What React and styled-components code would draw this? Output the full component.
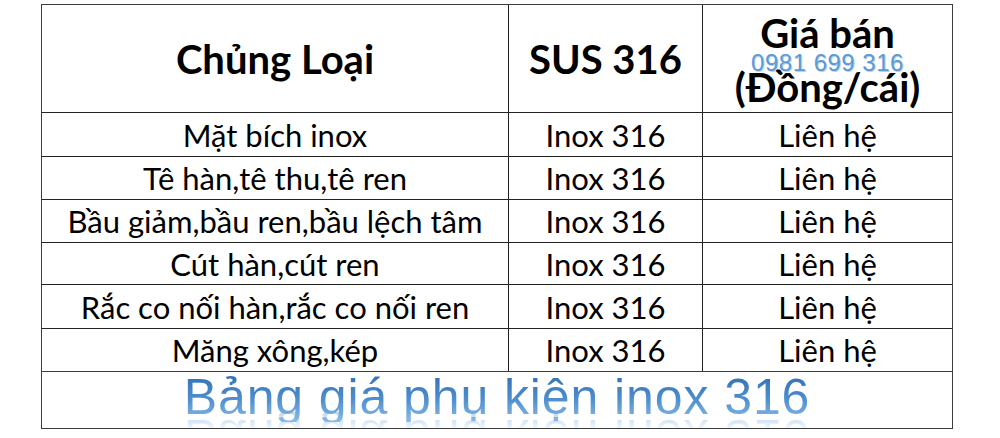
import styled, { createGlobalStyle } from "styled-components";

const GlobalStyle = createGlobalStyle`
	html, body {
		margin: 0;
		padding: 0;
		background: #ffffff;
	}
	body {
		font-family: Lato, "Open Sans", sans-serif;
		color: #000000;
	}
`;

const rows = [
	"Mặt bích inox",
	"Tê hàn,tê thu,tê ren",
	"Bầu giảm,bầu ren,bầu lệch tâm",
	"Cút hàn,cút ren",
	"Rắc co nối hàn,rắc co nối ren",
	"Măng xông,kép",
];

export default function App() {
	return (
		<>
			<GlobalStyle />
			<Page>
				<PriceTable>
					<HeadCell>Chủng Loại</HeadCell>
					<HeadCell>SUS 316</HeadCell>
					<HeadCell>
						<PriceHead>
							<span>Giá bán</span>
							<span>(Đồng/cái)</span>
						</PriceHead>
						<Phone>0981 699 316</Phone>
					</HeadCell>
					{rows.map((name) => (
						<Row key={name}>
							<Cell>{name}</Cell>
							<Cell>Inox 316</Cell>
							<Cell>Liên hệ</Cell>
						</Row>
					))}
					<Footer>
						<Title>Bảng giá phụ kiện inox 316</Title>
					</Footer>
				</PriceTable>
			</Page>
		</>
	);
}

const Page = styled.div`
	width: 1000px;
	height: 438px;
	padding: 4px 0 0 41px;
	box-sizing: border-box;
`;

const PriceTable = styled.div`
	display: grid;
	grid-template-columns: 466px 194px 250px;
	grid-template-rows: 107px 44px 43px 43px 42px 44px 43px 57px;
	width: 912px;
	border: 1.5px solid #3c3c3c;
	box-sizing: border-box;
`;

const Row = styled.div`
	display: contents;
`;

const Cell = styled.div`
	display: flex;
	justify-content: center;
	align-items: center;
	font-size: 31px;
	border-top: 1px solid #222222;
	border-left: 1px solid #222222;
	white-space: nowrap;

	&:first-child {
		border-left: none;
	}
`;

const HeadCell = styled(Cell)`
	font-size: 40px;
	font-weight: 700;
	border-top: none;
	position: relative;
`;

const PriceHead = styled.div`
	display: flex;
	flex-direction: column;
	align-items: center;
	line-height: 54px;
	margin-top: 2px;
`;

const Phone = styled.span`
	position: absolute;
	left: 0;
	right: 0;
	top: 46px;
	text-align: center;
	font-family: "Liberation Sans", Arial, sans-serif;
	font-weight: 400;
	font-size: 24px;
	line-height: 24px;
	letter-spacing: 0.5px;
	color: #5b9bd5;
	text-shadow: 1px 1px 0 #b7d1ee, -0.5px -0.5px 0 #ffffff;
`;

const Footer = styled.div`
	grid-column: 1 / -1;
	display: flex;
	justify-content: center;
	align-items: flex-start;
	border-top: 1.5px solid #3c3c3c;
	overflow: hidden;
`;

const Title = styled.div`
	font-family: "Liberation Sans", Arial, sans-serif;
	font-size: 50px;
	line-height: 50px;
	letter-spacing: 0.9px;
	background: linear-gradient(180deg, #2f6db3 0%, #4f8fcf 55%, #8bbbe6 100%);
	-webkit-background-clip: text;
	background-clip: text;
	color: transparent;
	-webkit-box-reflect: below -10px linear-gradient(transparent 62%, rgba(255, 255, 255, 0.55));
`;
